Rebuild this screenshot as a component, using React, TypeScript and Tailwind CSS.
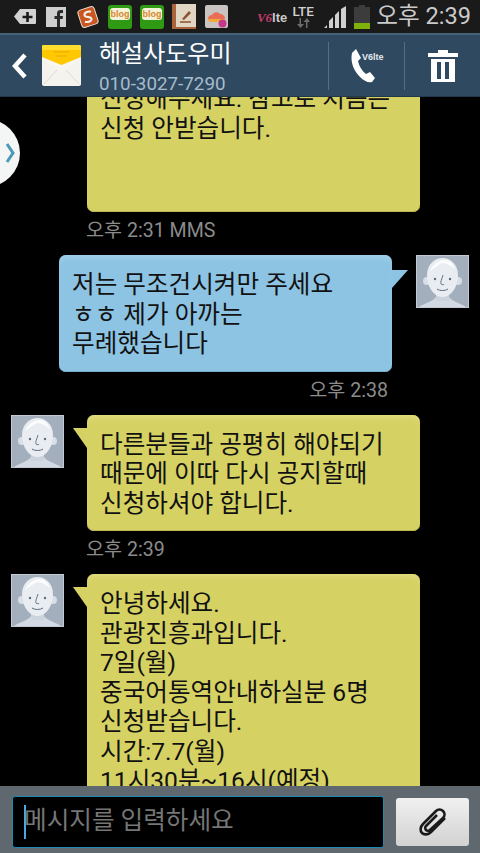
import type { ReactNode } from "react";

const fontStack = "font-['Roboto','Noto_Sans_CJK_KR',sans-serif]";

function Avatar() {
  return (
    <svg width="53" height="53" viewBox="0 0 53 53" className="shrink-0">
      <rect x="0.5" y="0.5" width="52" height="52" fill="#a4afbd" stroke="#c3cad3" />
      <path d="M3 52c8-5 15-6 17-10h13c2 4 9 5 17 10z" fill="#d3dae3" />
      <rect x="20" y="34" width="13" height="12" fill="#cbd3dd" />
      <circle cx="11" cy="26" r="4" fill="#d9dfe6" />
      <circle cx="42" cy="26" r="4" fill="#d9dfe6" />
      <path d="M11 20C11 9 19 3 26.500 3S42 9 42 20c0 12-7 22-15.500 22S11 32 11 20z" fill="#e9edf1" />
      <path d="M14 16c3-7 9-11 14-11 5 0 9 3 11 9-5-4-9-6-13-6-4 2-8 5-12 8z" fill="#fbfcfd" />
      <circle cx="19" cy="24" r="1.200" fill="#5d6a78" />
      <circle cx="34" cy="24" r="1.200" fill="#5d6a78" />
      <path d="M27 20c-1 4-3 7-2 9 1 1 3 1 3 0" fill="none" stroke="#5d6a78" strokeWidth="0.900" />
      <path d="M21 34c3 2 8 2 11 0" fill="none" stroke="#5d6a78" strokeWidth="1" />
    </svg>
  );
}

function Bubble({ color, className, children }: { color: "yellow" | "blue"; className?: string; children: ReactNode }) {
  const tone =
    color === "yellow"
      ? "bg-[#d6d163] shadow-[inset_0_6px_6px_-4px_#e3de86,inset_0_-1px_0_#bcb955]"
      : "bg-[#8dc4e3] shadow-[inset_0_6px_6px_-4px_#a5d3ec,inset_0_-1px_0_#78aecd]";
  return (
    <div
      className={`w-[333px] shrink-0 overflow-hidden rounded-[7px] px-[13px] pt-[15px] pb-[13px] text-[24.6px] leading-[29.5px] text-[#111] ${tone} ${className ?? ""}`}
    >
      {children}
    </div>
  );
}

function Stamp({ text, right }: { text: string; right?: boolean }) {
  return (
    <div
      className={`mt-[7px] mb-[12px] h-[24px] text-[19.6px] leading-[24px] text-[#8b8b8b] ${
        right ? "pr-[92px] text-right" : "pl-[86px]"
      }`}
    >
      {text}
    </div>
  );
}

function Incoming({ children }: { children: ReactNode }) {
  return (
    <div className="flex items-start pl-[11px]">
      <Avatar />
      <svg width="14" height="28" viewBox="0 0 14 28" className="mt-[13px] ml-[9px] shrink-0">
        <path d="M0 0H14V20z" fill="#d6d163" />
      </svg>
      <Bubble color="yellow">{children}</Bubble>
    </div>
  );
}

function BlogIcon({ className }: { className: string }) {
  return (
    <div className={`flex h-[24px] w-[24px] items-start justify-center rounded-[3px] bg-[#2f9a14] pt-[3px] ${className}`}>
      <div className="flex h-[12px] w-[20px] items-center justify-center rounded-[3px] bg-[#f2f2d8] text-[9px] leading-[12px] font-bold text-[#d8862a] font-['Liberation_Sans',sans-serif]">
        blog
      </div>
    </div>
  );
}

function StatusIcons() {
  return (
    <div className="flex items-center">
      <svg width="24" height="20" viewBox="0 0 24 20" className="ml-[13px]">
        <path d="M7 2h15a1 1 0 0 1 1 1v13a1 1 0 0 1-1 1H7l-6-7.500z" fill="#d2d2d2" />
        <path d="M14.500 5v10M9.500 10h10" stroke="#1a1a1a" strokeWidth="2.600" />
      </svg>
      <div className="relative ml-[9px] h-[20px] w-[20px] bg-[#cfcfcf]">
        <svg width="20" height="20" viewBox="0 0 20 20">
          <path d="M11 20v-8H8.500V9H11V6.500C11 4 12.500 3 14.500 3H17v3h-1.700c-.9 0-1.300.4-1.300 1.200V9h3l-.4 3H14v8z" fill="#2a2a2a" />
        </svg>
      </div>
      <svg width="22" height="24" viewBox="0 0 22 24" className="ml-[11px]">
        <rect x="2.500" y="3" width="17" height="18" rx="3" transform="rotate(-18 11 12)" fill="#c9571f" stroke="#e9e0d5" />
        <path d="M15 7.500c-3-1.500-7-.5-7 2 0 3 6 2 6 5 0 2.500-4 3-7 1.500" fill="none" stroke="#f4f0ea" strokeWidth="2" transform="rotate(-12 11 12)" />
      </svg>
      <BlogIcon className="ml-[9px]" />
      <BlogIcon className="ml-[8px]" />
      <svg width="24" height="25" viewBox="0 0 24 25" className="ml-[8px]">
        <rect x="0" y="0" width="24" height="25" fill="#a9633d" />
        <rect x="4" y="0" width="20" height="23" fill="#e1d6c3" />
        <path d="M10 15l7-8 2 2-7 7z" fill="#8b4f2e" />
        <path d="M8 18h11" stroke="#8b4f2e" strokeWidth="1.500" />
      </svg>
      <svg width="23" height="23" viewBox="0 0 23 23" className="ml-[9px]">
        <rect width="23" height="23" rx="2" fill="#c9c4c1" />
        <path d="M3 14c0-3 2-4 4-4 1-3 6-4 8-1 3 0 5 2 5 5z" fill="#ec6d57" />
        <path d="M3 14h17c0 2-2 3-4 3H6c-2 0-3-1-3-3z" fill="#f0ab3a" />
        <circle cx="17.500" cy="18.500" r="4" fill="#c6378e" />
      </svg>
    </div>
  );
}

function StatusRight() {
  return (
    <div className="flex items-center">
      <span className="mt-[2px] text-[13px] leading-none font-bold text-[#c9c9c9] font-['Liberation_Sans',sans-serif]">
        <span className="font-['Liberation_Serif',serif] text-[13px] text-[#c23a6d] italic">V6</span>lte
      </span>
      <div className="ml-[4px] flex w-[24px] flex-col items-center">
        <span className="text-[13.5px] leading-[13px] font-medium text-[#d0d0d0]">LTE</span>
        <svg width="14" height="10" viewBox="0 0 14 10">
          <path d="M4 10V4H1l3.500-4L8 4H5.500v6z" transform="rotate(180 4.500 5)" fill="#6c6c6c" />
          <path d="M10 10V4H7.500L11 0l3 4h-2.500v6z" fill="#6c6c6c" />
        </svg>
      </div>
      <svg width="23" height="22" viewBox="0 0 23 22" className="ml-[9px]">
        <path d="M0 22l3-3v3zM5 22v-7l4-4v11zM11 22V9l4-4v17zM17 22V3l5-3v22z" fill="#d0d0d0" />
      </svg>
      <svg width="16" height="24" viewBox="0 0 16 24" className="ml-[7px]">
        <path d="M5 0h6v2h5v22H0V2h5z" fill="#3c3c3c" />
        <rect y="18" width="16" height="6" fill="#7fb00e" />
      </svg>
      <span className="ml-[6px] text-[23.6px] leading-none text-[#cacaca]">오후 2:39</span>
    </div>
  );
}

export default function App() {
  return (
    <div className={`relative flex h-[853px] w-[480px] flex-col overflow-hidden bg-black ${fontStack}`}>
      <div className="flex h-[33px] shrink-0 items-center justify-between bg-[#1a1a1a] pr-[9px]">
        <StatusIcons />
        <StatusRight />
      </div>

      <header className="flex h-[64px] shrink-0 items-center border-t-2 border-b border-t-[#46627a] border-b-[#23394b] bg-[#2f4a60]">
        <svg width="16" height="26" viewBox="0 0 16 26" className="ml-[12px] shrink-0">
          <path d="M13 2L3 13l10 11" fill="none" stroke="#fff" strokeWidth="4.500" />
        </svg>
        <svg width="39" height="41" viewBox="0 0 39 41" className="ml-[14px] shrink-0">
          <rect y="0" width="39" height="40" rx="2" fill="#f7f6f0" />
          <path d="M0 13L19.500 27 39 13v26a2 2 0 0 1-2 2H2a2 2 0 0 1-2-2z" fill="#f4f3ee" />
          <path d="M2 39l13-14M37 39L24 25" stroke="#dcdbd4" strokeWidth="1" />
          <path d="M0 2a2 2 0 0 1 2-2h35a2 2 0 0 1 2 2v10L19.500 20 0 12z" fill="#ffc800" />
          <path d="M0 2a2 2 0 0 1 2-2h35a2 2 0 0 1 2 2v3H0z" fill="#ffdc2e" />
          <path d="M12 7h15M14 11h11" stroke="#e8a900" strokeWidth="1" />
        </svg>
        <div className="ml-[18px] flex flex-col pt-[2px]">
          <span className="text-[24px] leading-[30px] text-white">해설사도우미</span>
          <span className="mt-[4px] text-[18.8px] leading-[22px] text-[#a7bccc]">010-3027-7290</span>
        </div>
        <div className="ml-auto flex h-[48px] items-center">
          <div className="h-full w-px bg-[#56707f]" />
          <div className="flex w-[75px] items-center justify-center">
            <svg width="36" height="34" viewBox="0 0 36 34">
              <path d="M7 0l5 9-3 3c1 5 4 10 8 13l4-2 5 6-3 4c-4 1-8-1-12-5C5 22 1 13 3 4z" fill="#fff" />
              <text x="13" y="11" fontSize="9" fontWeight="700" fill="#e4e8ec" fontFamily="Liberation Sans">
                V6lte
              </text>
            </svg>
          </div>
          <div className="h-full w-px bg-[#56707f]" />
          <div className="flex w-[75px] items-center justify-center">
            <svg width="30" height="32" viewBox="0 0 30 32">
              <path d="M10 0h10v3h10v4H0V3h10z" fill="#fff" />
              <path d="M3 9h24v23H3zM9 12v17h4V12zM17 12v17h4V12z" fillRule="evenodd" fill="#fff" />
            </svg>
          </div>
        </div>
      </header>

      <main className="min-h-0 flex-1 overflow-hidden">
        <div className="-mt-[28px] pl-[87px]">
          <Bubble color="yellow" className="h-[143px]">
            신청해주세요. 참고로 처음은
            <br />
            신청 안받습니다.
          </Bubble>
        </div>
        <Stamp text="오후 2:31 MMS" />

        <div className="flex items-start pl-[59px]">
          <Bubble color="blue">
            저는 무조건시켜만 주세요
            <br />
            ㅎㅎ 제가 아까는
            <br />
            무례했습니다
          </Bubble>
          <svg width="16" height="28" viewBox="0 0 16 28" className="mt-[15px] shrink-0">
            <path d="M0 0H16L0 18z" fill="#8dc4e3" />
          </svg>
          <div className="ml-[8px]">
            <Avatar />
          </div>
        </div>
        <Stamp text="오후 2:38" right />

        <Incoming>
          다른분들과 공평히 해야되기
          <br />
          때문에 이따 다시 공지할때
          <br />
          신청하셔야 합니다.
        </Incoming>
        <Stamp text="오후 2:39" />

        <Incoming>
          안녕하세요.
          <br />
          관광진흥과입니다.
          <br />
          7일(월)
          <br />
          중국어통역안내하실분 6명
          <br />
          신청받습니다.
          <br />
          시간:7.7(월)
          <br />
          11시30분~16시(예정)
        </Incoming>
      </main>

      <footer className="flex h-[67px] shrink-0 items-start bg-[#5f686e] pt-[10px] pl-[12px]">
        <div className="flex h-[52px] w-[372px] items-center rounded-[3px] border border-[#1b8ab5] bg-black pl-[11px]">
          <div className="h-[34px] w-[2px] bg-[#4aa8e8]" />
          <span className="-mt-[2px] -ml-[2px] text-[24.6px] leading-none text-[#767676]">메시지를 입력하세요</span>
        </div>
        <button className="mt-[2px] ml-[12px] flex h-[48px] w-[73px] items-center justify-center rounded-[3px] bg-gradient-to-b from-[#f0f0f0] to-[#d2d2d2]">
          <svg width="30" height="30" viewBox="0 0 30 30">
            <path
              d="M27 11L13 25c-3 3-7 3-9 1s-2-6 1-9L18 4c2-2 5-2 7 0s2 5 0 7L12 23c-1 1-3 1-4 0s-1-3 0-4l11-11"
              fill="none"
              stroke="#1a1a1a"
              strokeWidth="2.600"
            />
          </svg>
        </button>
      </footer>

      {/* side handle over the message list */}
      <div className="absolute top-[119px] -left-[48px] flex h-[68px] w-[68px] items-center justify-end rounded-full bg-[#f4f5f5] pr-[5px]">
        <svg width="10" height="20" viewBox="0 0 10 20">
          <path d="M2 1l6 9-6 9" fill="none" stroke="#4a9ab5" strokeWidth="3" />
        </svg>
      </div>
    </div>
  );
}
